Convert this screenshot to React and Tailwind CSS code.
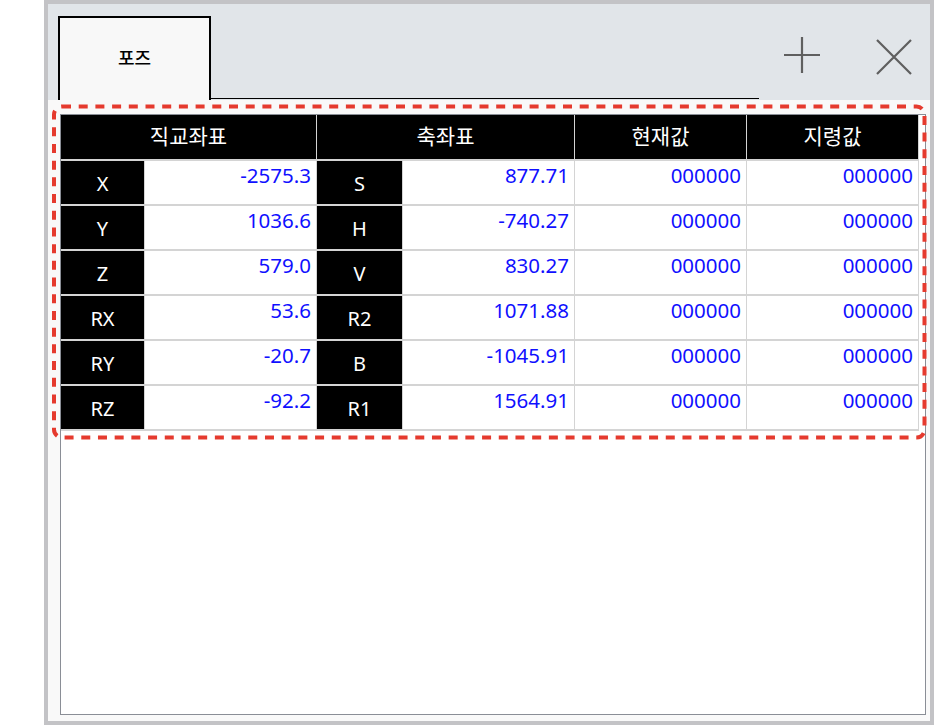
import React from "react";

const ROWS = [
  { a: "X", av: "-2575.3", b: "S", bv: "877.71" },
  { a: "Y", av: "1036.6", b: "H", bv: "-740.27" },
  { a: "Z", av: "579.0", b: "V", bv: "830.27" },
  { a: "RX", av: "53.6", b: "R2", bv: "1071.88" },
  { a: "RY", av: "-20.7", b: "B", bv: "-1045.91" },
  { a: "RZ", av: "-92.2", b: "R1", bv: "1564.91" },
];

const HEADERS = [
  { label: "직교좌표", span: "col-span-2" },
  { label: "축좌표", span: "col-span-2" },
  { label: "현재값", span: "" },
  { label: "지령값", span: "" },
];

function Label({ children }) {
  return (
    <div className="flex items-center justify-center bg-black pt-[3px] text-[20px] text-white">
      {children}
    </div>
  );
}

function Value({ children }) {
  return (
    <div className="bg-white pr-[5px] pt-px text-right text-[20.5px] leading-[27px] text-[#1010ff]">
      {children}
    </div>
  );
}

export default function App() {
  return (
    <div
      className="relative h-[725px] w-[934px] overflow-hidden bg-white"
      style={{ fontFamily: "'Noto Sans', 'Noto Sans CJK KR', sans-serif" }}
    >
      <div className="ml-[44px] flex h-[725px] w-[890px] flex-col border-4 border-[#c3c3c6] bg-[#f9f9f9]">
        {/* tab strip */}
        <div className="flex h-[96px] shrink-0 items-end bg-[#e1e5e9]">
          <div className="ml-[10px] flex h-[84px] w-[153px] items-center justify-center border-2 border-b-0 border-black bg-[#f8f8f8] pb-[2px] text-[18px] font-medium text-black">
            포즈
          </div>
          <div className="mb-px h-px w-[548px] bg-black" />
          <svg
            className="mb-[27px] ml-[25px] self-end"
            width="36"
            height="36"
            viewBox="0 0 36 36"
          >
            <path d="M18 0V36M0 18H36" stroke="#5f5f5f" strokeWidth="2.2" />
          </svg>
          <svg
            className="mb-[25px] ml-[56px] self-end"
            width="36"
            height="36"
            viewBox="0 0 36 36"
          >
            <path d="M1 1L35 35M35 1L1 35" stroke="#5f5f5f" strokeWidth="2.2" />
          </svg>
        </div>

        {/* content */}
        <div className="pl-[12px] pt-[14px]">
          <div className="h-[601px] w-[866px] border border-[#8a8e96] bg-white">
            <div className="grid w-[858px] grid-cols-[83px_171px_85px_171px_171px_171px] grid-rows-[44px_repeat(6,43px)] gap-x-px gap-y-[2px] bg-[#d4d4d4] pb-[2px] pr-px">
              {HEADERS.map((h) => (
                <div
                  key={h.label}
                  className={`${h.span} flex items-center justify-center bg-black text-[21px] text-white`}
                >
                  {h.label}
                </div>
              ))}
              {ROWS.map((r) => (
                <React.Fragment key={r.a}>
                  <Label>{r.a}</Label>
                  <Value>{r.av}</Value>
                  <Label>{r.b}</Label>
                  <Value>{r.bv}</Value>
                  <Value>000000</Value>
                  <Value>000000</Value>
                </React.Fragment>
              ))}
            </div>
          </div>
        </div>
      </div>

      {/* red dashed annotation */}
      <svg
        className="pointer-events-none absolute left-0 top-0"
        width="934"
        height="725"
      >
        <rect
          x="54"
          y="106.5"
          width="870.5"
          height="331"
          rx="8"
          fill="none"
          stroke="#e53a2e"
          strokeWidth="4"
          strokeDasharray="9 7.7"
        />
      </svg>
    </div>
  );
}
